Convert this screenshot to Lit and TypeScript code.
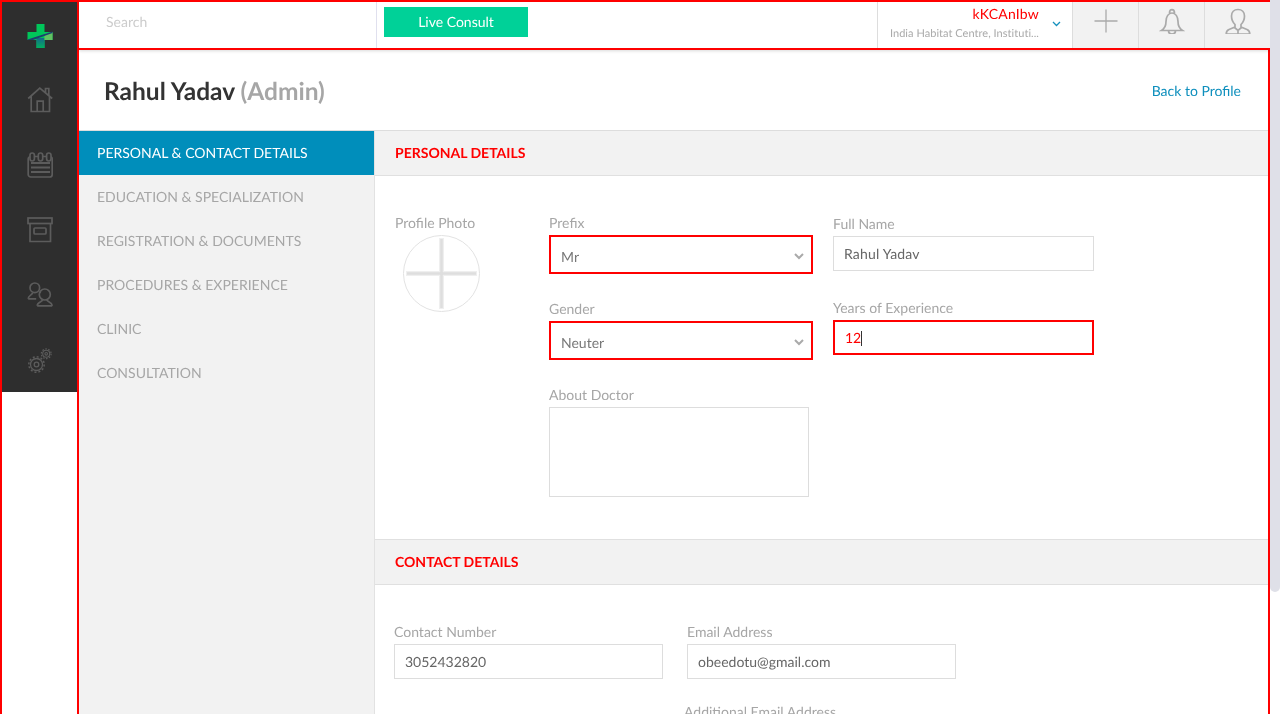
import { LitElement, html, css, svg } from "lit";
import { customElement } from "lit/decorators.js";

const navIcons = [
  svg`<path d="M1.200 11.500 12.800 1.200 25.200 11.500M4.200 9v15.500h18.300V9M10.200 24.500V14.200h6v10.300M18.500 5.500V1.500h3.300v7"/>`,
  svg`<rect x="1.200" y="4.500" width="24" height="20.500" rx="2.500"/><path d="M4 11h19M4 15.500h19M4 20h19" stroke-width="2"/><rect x="3" y="1" width="4.400" height="8" rx="2.200" fill="#2e2e2e"/><rect x="11.300" y="1" width="4.400" height="8" rx="2.200" fill="#2e2e2e"/><rect x="19.600" y="1" width="4.400" height="8" rx="2.200" fill="#2e2e2e"/>`,
  svg`<rect x="1" y="1" width="24" height="5.500"/><path d="M3 6.500v18h20.500v-18"/><rect x="7" y="11" width="12" height="6" rx="1"/>`,
  svg`<circle cx="7.800" cy="5.800" r="4.800"/><path d="M1.200 16.800h8M1.200 16.800c0-3.500 3.500-3 4.500-6M14 10.500c-.5-.3-1-.4-1.500-.4"/><circle cx="17.800" cy="12.500" r="5.500"/><path d="M10.200 23.800h15M10.200 23.800c0-4 5-3.500 5.500-6.300M25.200 23.800c0-4-5-3.500-5.500-6.300"/>`,
  svg`<circle cx="9.500" cy="17.500" r="6" stroke-width="1.300"/><circle cx="9.500" cy="17.500" r="2.300" stroke-width="1.300"/><circle cx="9.500" cy="17.500" r="7.700" stroke-dasharray="2 2.030" stroke-width="1.500"/><circle cx="19.200" cy="6.800" r="3.500" stroke-width="1.100"/><circle cx="19.200" cy="6.800" r="1.300" stroke-width="1.100"/><circle cx="19.200" cy="6.800" r="4.900" stroke-dasharray="1.500 1.580" stroke-width="1.200"/>`,
];

const menu = [
  "PERSONAL & CONTACT DETAILS",
  "EDUCATION & SPECIALIZATION",
  "REGISTRATION & DOCUMENTS",
  "PROCEDURES & EXPERIENCE",
  "CLINIC",
  "CONSULTATION",
];

@customElement("app-root")
export class AppRoot extends LitElement {
  static styles = css`
    :host {
      display: flex;
      height: 714px;
      overflow: hidden;
      font-family: Lato, "Open Sans", sans-serif;
      background: #fff;
      color: #666;
      text-rendering: geometricPrecision;
    }
    * { box-sizing: border-box; }
    .rail {
      width: 79px;
      flex: none;
      border: 2px solid #f00;
      border-bottom: none;
    }
    .nav {
      height: 390px;
      background: #2e2e2e;
      display: flex;
      flex-direction: column;
      align-items: center;
    }
    .logo { width: 26px; height: 26px; flex: none; margin-top: 21px; margin-bottom: 38px; display: block; }
    .nav-icon {
      width: 26px;
      height: 26px;
      flex: none;
      margin-bottom: 39px;
      fill: none;
      stroke: #5c5c5c;
      stroke-width: 1.700;
      display: block;
    }
    .main {
      width: 1191px;
      flex: none;
      border-right: 2px solid #f00;
      display: flex;
      flex-direction: column;
      min-height: 0;
      will-change: transform;
    }
    .top {
      height: 50px;
      flex: none;
      border-top: 2px solid #f00;
      border-bottom: 2px solid #f00;
      display: flex;
      box-shadow: 0 1px 3px rgba(0,0,0,.15);
      margin-right: -2px;
    }
    .search {
      width: 298px;
      border-right: 1px solid #e0e0ee;
      padding: 11px 0 0 27px;
      font-size: 14px;
      color: #ccc;
      line-height: 17px;
    }
    .consult-wrap { flex: 1; padding: 5px 0 0 7px; }
    .consult {
      width: 144px;
      height: 30px;
      background: #00d198;
      color: #fff;
      font-size: 14px;
      padding-bottom: 2px;
      display: flex;
      align-items: center;
      justify-content: center;
    }
    .loc {
      width: 195px;
      border-left: 1px solid #ddd;
      display: flex;
      position: relative;
      flex-direction: column;
      align-items: flex-end;
      padding: 3px 33px 0 0;
    }
    .loc-name { color: #f00; font-size: 14px; line-height: 17px; letter-spacing: .2px; }
    .loc-sub { color: #aaa; font-size: 11px; line-height: 14px; margin-top: 5px; width: 150px; white-space: nowrap; text-align: right; letter-spacing: .04px; }
    .loc-chev { position: absolute; right: 11px; top: 19px; width: 9px; height: 6px; fill: none; stroke: #1590bd; stroke-width: 1.300; }
    .tool {
      width: 66px;
      background: #f2f2f2;
      border-left: 1px solid #ddd;
      display: flex;
      justify-content: center;
      padding-top: 6px;
    }
    .tool svg { width: 26px; height: 26px; fill: none; stroke: #aaa; stroke-width: 1.700; display: block; }
    .tool svg.thin { stroke-width: 1.300; }
    .title-row {
      height: 81px;
      flex: none;
      display: flex;
      align-items: center;
      justify-content: space-between;
      padding: 4px 27px 0 25px;
      border-bottom: 1px solid #ddd;
    }
    h1 { margin: 0; font-size: 24.500px; font-weight: 700; color: #333; line-height: 30px; }
    h1 span { color: #a6a6a6; }
    .back { color: #0e8fbd; font-size: 14px; margin-bottom: 4px; }
    .body { flex: 1; display: flex; min-height: 0; }
    .side { width: 296px; flex: none; background: #f2f2f2; border-right: 1px solid #e2e2e2; }
    .side div {
      height: 44px;
      padding-left: 18px;
      font-size: 14px;
      line-height: 44px;
      color: #a6a6a6;
    }
    .side .on { background: #008ebb; color: #fff; }
    .panel { flex: 1; min-width: 0; overflow: hidden; }
    .sec {
      height: 45px;
      background: #f2f2f2;
      border-bottom: 1px solid #e0e0e0;
      color: #f00;
      font-weight: 700;
      font-size: 14px;
      line-height: 44px;
      padding-left: 20px;
    }
    .sec.second { border-top: 1px solid #e0e0e0; height: 46px; }
    .personal { height: 363px; display: flex; padding: 38px 0 0 20px; }
    .photo { width: 154px; flex: none; }
    label { display: block; font-size: 14px; line-height: 17px; color: #a6a6a6; }
    .circle { width: 77px; height: 77px; margin: 4px 0 0 8px; display: block; }
    .col1 { width: 264px; flex: none; }
    .col2 { width: 261px; flex: none; margin-left: 20px; padding-top: 1px; }
    .sel {
      height: 39px;
      border: 2px solid #f00;
      margin-top: 4px;
      display: flex;
      align-items: center;
      justify-content: space-between;
      padding: 4px 7px 0 10px;
      font-size: 14px;
      color: #777;
    }
    .sel svg { width: 10px; height: 7px; fill: none; stroke: #aaa; stroke-width: 2; margin-top: -1px; }
    .col1 .gap { margin-top: 26px; }
    .col1 .gap2 { margin-top: 26px; }
    .input {
      height: 35px;
      border: 1px solid #ddd;
      margin-top: 4px;
      padding: 0 10px;
      font-size: 14px;
      line-height: 33px;
      color: #666;
    }
    .input.name { letter-spacing: .2px; }
    .input.err { border: 2px solid #f00; color: #f00; line-height: 31px; padding: 0 10px; }
    .caret { display: inline-block; width: 1px; height: 15px; background: #333; vertical-align: -3px; }
    .col2 .gap { margin-top: 28px; }
    .area { width: 260px; height: 90px; border: 1px solid #ddd; margin-top: 4px; }
    .contact { display: flex; padding: 38px 0 0 19px; }
    .c1 { width: 269px; flex: none; }
    .c2 { width: 269px; flex: none; margin-left: 24px; }
    .add { margin: 24px 0 0 309px; }
    .scroll {
      position: absolute;
      left: 1270px;
      top: 0;
      width: 10px;
      height: 592px;
      background: #dfe0e8;
      border-radius: 0 0 5px 5px;
    }
  `;

  render() {
    return html`
      <div class="rail">
        <div class="nav">
          <svg class="logo" viewBox="0 0 26 26">
            <defs>
              <linearGradient id="lg" x1="0" y1="0" x2="0" y2="1">
                <stop offset="0" stop-color="#17688a"/>
                <stop offset="1" stop-color="#00b060"/>
              </linearGradient>
            </defs>
            <path d="M9.500 1h8v8h8v8h-8v8h-8v-8h-9V9h9z" fill="#00c65a"/>
            <path d="M9.500 15h8v10h-8z" fill="url(#lg)"/>
            <path d="M17.500 11l8-2v8h-8z" fill="#62c162"/>
            <path d="M.5 16.500 25.500 8.500v1.500L6 17H.5z" fill="#1c3f6e"/>
          </svg>
          ${navIcons.map((p) => html`<svg class="nav-icon" viewBox="0 0 26 26">${p}</svg>`)}
        </div>
      </div>
      <div class="main">
        <div class="top">
          <div class="search">Search</div>
          <div class="consult-wrap"><div class="consult">Live Consult</div></div>
          <div class="loc">
            <div class="loc-name">kKCAnIbw</div>
            <div class="loc-sub">India Habitat Centre, Instituti...</div>
            <svg class="loc-chev" viewBox="0 0 9 6"><path d="M1 1l3.500 3.500L8 1"/></svg>
          </div>
          <div class="tool"><svg class="thin" viewBox="0 0 26 26"><path d="M13 1.500v23M1.500 13h23"/></svg></div>
          <div class="tool"><svg viewBox="0 0 26 26"><path d="M2.500 22.500c2.500-1.500 4.500-3.500 4.500-9 0-5 2.500-8.500 6-8.500s6 3.500 6 8.500c0 5.500 2 7.500 4.500 9zM10.500 5c0-4.500 5-4.500 5 0M9.500 23c0 4 7 4 7 0"/></svg></div>
          <div class="tool"><svg viewBox="0 0 26 26"><path d="M13 1.500c-4 0-6.500 2.700-6.500 6.500 0 3.500 1.500 6.500 3.500 8.500v2.500L4 21.500c-2 .8-2.800 2-2.800 4.500h23.600c0-2.500-.8-3.700-2.800-4.500L16 19v-2.500c2-2 3.500-5 3.500-8.500 0-3.800-2.500-6.500-6.500-6.500zM9.500 19.500l3.500 3 3.500-3M13 22.500V26"/></svg></div>
        </div>
        <div class="title-row">
          <h1>Rahul Yadav <span>(Admin)</span></h1>
          <div class="back">Back to Profile</div>
        </div>
        <div class="body">
          <div class="side">
            ${menu.map((m, i) => html`<div class=${i === 0 ? "on" : ""}>${m}</div>`)}
          </div>
          <div class="panel">
            <div class="sec">PERSONAL DETAILS</div>
            <div class="personal">
              <div class="photo">
                <label>Profile Photo</label>
                <svg class="circle" viewBox="0 0 77 77">
                  <circle cx="38.500" cy="38.500" r="38" fill="none" stroke="#e2e2e2"/>
                  <path d="M38.500 3v71M3 38.500h71" stroke="#efefef" stroke-width="5" fill="none"/>
                  <path d="M38.500 4v69M4 38.500h69" stroke="#dedede" stroke-width="2.500" fill="none"/>
                </svg>
              </div>
              <div class="col1">
                <label>Prefix</label>
                <div class="sel">Mr<svg viewBox="0 0 10 7"><path d="M1 1l4 4 4-4"/></svg></div>
                <label class="gap">Gender</label>
                <div class="sel">Neuter<svg viewBox="0 0 10 7"><path d="M1 1l4 4 4-4"/></svg></div>
                <label class="gap2">About Doctor</label>
                <div class="area"></div>
              </div>
              <div class="col2">
                <label>Full Name</label>
                <div class="input name">Rahul Yadav</div>
                <label class="gap">Years of Experience</label>
                <div class="input err">12<span class="caret"></span></div>
              </div>
            </div>
            <div class="sec second">CONTACT DETAILS</div>
            <div class="contact">
              <div class="c1"><label>Contact Number</label><div class="input">3052432820</div></div>
              <div class="c2"><label>Email Address</label><div class="input">obeedotu@gmail.com</div></div>
            </div>
            <label class="add">Additional Email Address</label>
          </div>
        </div>
      </div>
      <div class="scroll"></div>
    `;
  }
}
